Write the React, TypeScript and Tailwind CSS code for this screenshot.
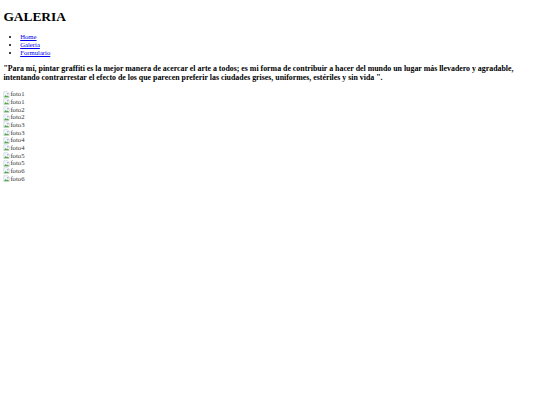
const fotos = ["foto1", "foto1", "foto2", "foto2", "foto3", "foto3", "foto4", "foto4", "foto5", "foto5", "foto6", "foto6"];

// small "broken image" icon, like the browser draws for a missing picture
function BrokenIcon() {
  return (
    <svg width="7" height="7" viewBox="0 0 16 16" className="inline-block align-[-1px]">
      <path d="M1.5 1.5h9l4 4v9h-13z" fill="#f4f6f8" stroke="#b8c0c8" />
      <path d="M2 14l4-5 3 3 2-2 3 4z" fill="#5aa64a" />
      <circle cx="11" cy="6" r="1.6" fill="#6aa0d8" />
    </svg>
  );
}

export default function App() {
  return (
    <div className="min-h-[405px] bg-white px-[3.4px] text-black" style={{ fontFamily: '"Liberation Serif", "Times New Roman", serif' }}>
      <h1 className="pt-[9px] pb-[9px] text-[13.4px] font-bold leading-[15.4px]">GALERIA</h1>

      <ul className="list-disc pl-[16.8px] text-[6.7px] leading-[7.7px]">
        <li><a href="#" className="text-[#0000ee] underline">Home</a></li>
        <li><a href="#" className="text-[#0000ee] underline">Galeria</a></li>
        <li><a href="#" className="text-[#0000ee] underline">Formulario</a></li>
      </ul>

      <h3 className="mt-[7.9px] mb-[7.9px] text-[7.86px] font-bold leading-[9.05px]">
        "Para mí, pintar graffiti es la mejor manera de acercar el arte a todos; es mi forma de contribuir a hacer del mundo un lugar más llevadero y agradable, intentando contrarrestar el efecto de los que parecen preferir las ciudades grises, uniformes, estériles y sin vida ".
      </h3>

      <div className="flex flex-col text-[6.7px] leading-[7.65px] text-[#333]">
        {fotos.map((f, i) => (
          <span key={i} className="flex items-center">
            <BrokenIcon />
            {f}
          </span>
        ))}
      </div>
    </div>
  );
}
